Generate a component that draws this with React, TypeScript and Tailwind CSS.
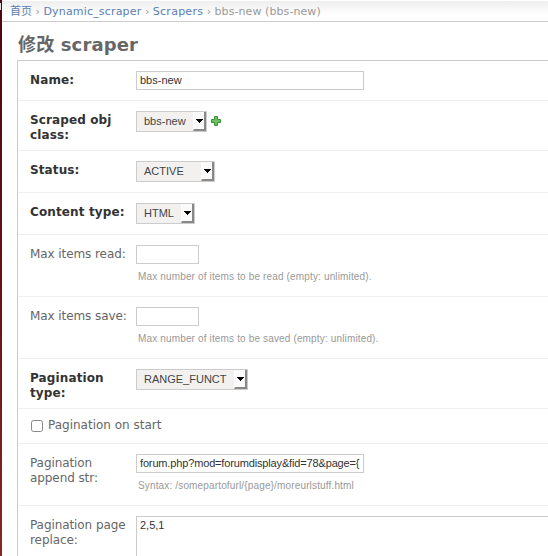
import type { ReactNode } from "react";

const sans = "font-['DejaVu_Sans','Noto_Sans_CJK_SC',sans-serif]";
const field = "font-['Liberation_Sans',Arial,sans-serif]";

function Row({ label, bold, height, children }: { label: string; bold?: boolean; height: string; children: ReactNode }) {
  return (
    <div className={`flex border-b border-[#eee] pl-3 pt-[10px] ${height}`}>
      <label
        className={`w-[106px] shrink-0 pt-[2px] text-[12px] leading-[15px] ${
          bold ? "font-bold tracking-[0.12px] text-[#333]" : "tracking-[-0.08px] text-[#666]"
        }`}
      >
        {label}
      </label>
      <div className="min-w-0 grow">{children}</div>
    </div>
  );
}

function Select({ value, width }: { value: string; width: string }) {
  return (
    <div className={`${field} ${width} flex h-[21px] shrink-0 border border-[#ccc] bg-[#f2f1f0] text-[11px] leading-[19px] text-[#444]`}>
      <span className="grow whitespace-nowrap pl-[7px]">{value}</span>
      <span className="flex h-[19px] w-[13px] shrink-0 items-start border-b-2 border-l border-r-2 border-b-[#888] border-l-white border-r-[#888] bg-[#fafafa] pl-[2px] pt-[7px]">
        <svg className="shrink-0" width="7" height="4" viewBox="0 0 7 4" shapeRendering="crispEdges">
          <path d="M0 0h7v1H6v1H5v1H4v1H3V3H2V2H1V1H0z" fill="#000" />
        </svg>
      </span>
    </div>
  );
}

function Input({ value, width, spacing = "tracking-normal" }: { value?: string; width: string; spacing?: string }) {
  return (
    <input
      type="text"
      readOnly
      value={value ?? ""}
      className={`${field} ${width} ${spacing} block h-[19px] border border-[#ccc] bg-white px-[3px] pb-px text-[11px] leading-[15px] text-[#333] outline-none`}
    />
  );
}

function Help({ children }: { children: ReactNode }) {
  return <p className={`${field} mt-[6px] pl-[2px] text-[10px] leading-[13px] tracking-[0.15px] text-[#999]`}>{children}</p>;
}

export default function App() {
  return (
    <div className={`${sans} flex h-[556px] w-[548px] overflow-hidden bg-white text-[12px] text-[#333]`}>
      <div className="w-[2px] shrink-0 bg-gradient-to-b from-[#4b0710] via-[#681018] to-[#842823]">
        <div className="mt-[3px] h-[7px] w-px bg-[#ddd]" />
      </div>
      <div className="min-w-0 grow">
        <nav className="mt-px flex h-[21px] items-center gap-[3.5px] whitespace-nowrap border-b border-[#ccc] bg-gradient-to-b from-[#eee] to-white to-70% pl-[8px] pt-px text-[11px] leading-[20px] text-[#999]">
          <a className="text-[#5b80b2]">首页</a>
          <span>›</span>
          <a className="tracking-[0.18px] text-[#5b80b2]">Dynamic_scraper</a>
          <span>›</span>
          <a className="tracking-[0.25px] text-[#5b80b2]">Scrapers</a>
          <span>›</span>
          <span className="tracking-[0.08px]">bbs-new (bbs-new)</span>
        </nav>
        <h1 className="h-[38px] pl-[16px] pt-[11px] text-[18px] font-bold leading-[23px] tracking-[0.15px] text-[#666]">修改 scraper</h1>
        <form className="ml-[15px] border-l border-t border-[#ccc]">
          <Row label="Name:" bold height="h-[40px]">
            <Input value="bbs-new" width="w-[228px]" />
          </Row>
          <Row label="Scraped obj class:" bold height="h-[50px]">
            <div className="flex items-center gap-[4px]">
              <Select value="bbs-new" width="w-[71px]" />
              <svg className="-mt-px" width="10" height="10" viewBox="0 0 10 10">
                <path d="M3.5 .5h3v3h3v3h-3v3h-3v-3h-3v-3h3z" fill="#70bf5f" stroke="#349534" />
              </svg>
            </div>
          </Row>
          <Row label="Status:" bold height="h-[42px]">
            <Select value="ACTIVE" width="w-[79px]" />
          </Row>
          <Row label="Content type:" bold height="h-[42px]">
            <Select value="HTML" width="w-[59px]" />
          </Row>
          <Row label="Max items read:" height="h-[62px]">
            <Input width="w-[63px]" />
            <Help>Max number of items to be read (empty: unlimited).</Help>
          </Row>
          <Row label="Max items save:" height="h-[62px]">
            <Input width="w-[63px]" />
            <Help>Max number of items to be saved (empty: unlimited).</Help>
          </Row>
          <Row label="Pagination type:" bold height="h-[50px]">
            <Select value="RANGE_FUNCT" width="w-[112px]" />
          </Row>
          <label className="flex h-[35px] border-b border-[#eee] pl-[13px] pt-[9px] text-[12px] leading-[15px] text-[#666]">
            <input type="checkbox" className="mr-[5px] mt-[2px] h-[12px] w-[12px] appearance-none rounded-[2.5px] border border-[#888] bg-white" />
            Pagination on start
          </label>
          <Row label="Pagination append str:" height="h-[62px]">
            <Input value="forum.php?mod=forumdisplay&fid=78&page={" width="w-[228px]" spacing="tracking-[-0.15px]" />
            <Help>Syntax: /somepartofurl/{"{page}"}/moreurlstuff.html</Help>
          </Row>
          <Row label="Pagination page replace:" height="h-[62px]">
            <textarea
              readOnly
              value="2,5,1"
              className={`${field} block h-[60px] w-[600px] resize-none border border-[#ccc] bg-white px-[3px] py-[2px] text-[11px] leading-[13px] text-[#333] outline-none`}
            />
          </Row>
        </form>
      </div>
    </div>
  );
}
